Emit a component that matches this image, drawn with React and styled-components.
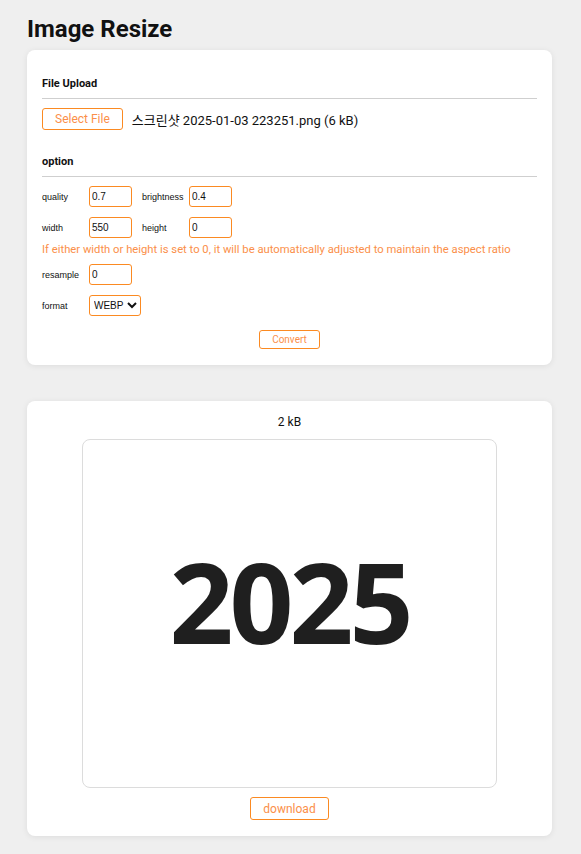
import React, { useState } from "react";
import styled, { createGlobalStyle } from "styled-components";

const GlobalStyle = createGlobalStyle`
  html, body {
    margin: 0;
    padding: 0;
    background: #efefef;
    font-family: Roboto, "Liberation Sans", Arial, sans-serif;
    color: #111;
  }
`;

const ORANGE = "#fb8a22";
const ORANGE_TEXT = "#fb8f4a";

const Page = styled.div`
  padding: 0 29px 20px 27px;
`;

const Title = styled.h1`
  margin: 0;
  padding-top: 14px;
  font-size: 24px;
  line-height: 30px;
  font-weight: 700;
  height: 36px;
`;

const Card = styled.section`
  background: #fff;
  border-radius: 8px;
  box-shadow: 0 1px 6px rgba(0, 0, 0, 0.08);
  padding: ${(p) => p.$pad || "15px 15px 16px"};
  margin-bottom: 36px;
`;

const SectionTitle = styled.div`
  font-size: 11px;
  line-height: 13px;
  font-weight: 700;
  margin-top: ${(p) => p.$top || 0}px;
  padding-bottom: 8px;
  border-bottom: 1px solid #cfcfcf;
`;

const FileRow = styled.div`
  display: flex;
  align-items: center;
  gap: 9px;
  margin-top: 9px;
`;

const OutlineButton = styled.button`
  background: #fff;
  border: 1px solid ${ORANGE};
  border-radius: 3px;
  color: ${ORANGE_TEXT};
  font-family: Roboto, "Liberation Sans", Arial, sans-serif;
  font-size: ${(p) => p.$size || 12}px;
  height: ${(p) => p.$h || 22}px;
  padding: 0 ${(p) => p.$px || 12}px;
  cursor: pointer;
`;

const FileName = styled.span`
  font-size: 13px;
  font-family: Roboto, "Noto Sans CJK KR", sans-serif;
`;

const Options = styled.div`
  display: flex;
  flex-direction: column;
  gap: 10px;
  margin-top: 9px;
`;

const Row = styled.div`
  display: flex;
  align-items: center;
`;

const Label = styled.label`
  font-family: "Liberation Sans", Arial, sans-serif;
  font-size: 9px;
  width: ${(p) => p.$w || 47}px;
`;

const Field = styled.input`
  box-sizing: border-box;
  width: 43px;
  height: 21px;
  border: 1px solid ${ORANGE};
  border-radius: 3px;
  padding: 0 2px;
  font-family: "Liberation Sans", Arial, sans-serif;
  font-size: 10px;
  color: #111;
  margin-right: ${(p) => p.$mr || 0}px;
  outline: none;
`;

const Select = styled.select`
  box-sizing: border-box;
  height: 21px;
  border: 1px solid ${ORANGE};
  border-radius: 3px;
  font-family: "Liberation Sans", Arial, sans-serif;
  font-size: 10px;
  color: #111;
  background: #fff;
  padding: 0;
`;

const Hint = styled.div`
  font-size: 11.25px;
  line-height: 13px;
  color: ${ORANGE_TEXT};
  margin: -5px 0 -2px;
`;

const Center = styled.div`
  display: flex;
  justify-content: center;
  margin-top: ${(p) => p.$top || 0}px;
`;

const Size = styled.div`
  text-align: center;
  font-size: 12px;
  line-height: 14px;
`;

const Preview = styled.div`
  box-sizing: border-box;
  width: 415px;
  height: 349px;
  margin: 10px auto 0;
  border: 1px solid #dcdcdc;
  border-radius: 8px;
  display: flex;
  align-items: center;
  justify-content: center;
`;

const PreviewText = styled.span`
  font-family: "Open Sans", sans-serif;
  font-weight: 700;
  font-size: 112px;
  letter-spacing: -4px;
  color: #1f1f1f;
  filter: blur(0.5px);
  margin-top: -26px;
`;

export default function App() {
  const [opts, setOpts] = useState({
    quality: "0.7",
    brightness: "0.4",
    width: "550",
    height: "0",
    resample: "0",
    format: "WEBP",
  });
  const set = (k) => (e) => setOpts({ ...opts, [k]: e.target.value });

  return (
    <>
      <GlobalStyle />
      <Page>
        <Title>Image Resize</Title>
        <Card>
          <SectionTitle $top={12}>File Upload</SectionTitle>
          <FileRow>
            <OutlineButton>Select File</OutlineButton>
            <FileName>스크린샷 2025-01-03 223251.png (6 kB)</FileName>
          </FileRow>
          <SectionTitle $top={25}>option</SectionTitle>
          <Options>
            <Row>
              <Label>quality</Label>
              <Field value={opts.quality} onChange={set("quality")} $mr={10} />
              <Label>brightness</Label>
              <Field value={opts.brightness} onChange={set("brightness")} />
            </Row>
            <Row>
              <Label>width</Label>
              <Field value={opts.width} onChange={set("width")} $mr={10} />
              <Label>height</Label>
              <Field value={opts.height} onChange={set("height")} />
            </Row>
            <Hint>
              If either width or height is set to 0, it will be automatically adjusted to maintain the aspect ratio
            </Hint>
            <Row>
              <Label>resample</Label>
              <Field value={opts.resample} onChange={set("resample")} />
            </Row>
            <Row>
              <Label>format</Label>
              <Select value={opts.format} onChange={set("format")}>
                <option>WEBP</option>
                <option>PNG</option>
                <option>JPEG</option>
              </Select>
            </Row>
          </Options>
          <Center $top={14}>
            <OutlineButton $size={10} $h={19} $px={12}>Convert</OutlineButton>
          </Center>
        </Card>
        <Card $pad="14px 15px 16px">
          <Size>2 kB</Size>
          <Preview>
            <PreviewText>2025</PreviewText>
          </Preview>
          <Center $top={9}>
            <OutlineButton $h={23} $px={12}>download</OutlineButton>
          </Center>
        </Card>
      </Page>
    </>
  );
}
